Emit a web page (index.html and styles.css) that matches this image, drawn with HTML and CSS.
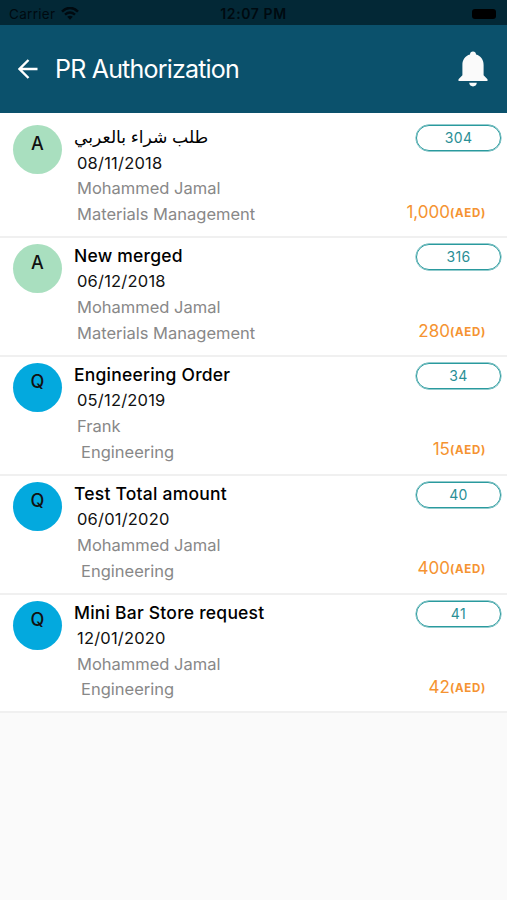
FILE: index.html
```html
<!DOCTYPE html>
<html lang="en">
<head>
    <meta charset="UTF-8">
    <meta name="viewport" content="width=device-width, initial-scale=1.0">
    <title>PR Authorization</title>
    <link rel="stylesheet" href="styles.css">
</head>
<body>

    <div class="status-bar">
        <div class="carrier">
            <span>Carrier</span>
            <svg class="wifi" viewBox="0 0 18 13" width="18" height="13">
                <path d="M1 4.6 Q9 -2.6 17 4.6" fill="none" stroke="#000a10" stroke-width="2.6"/>
                <path d="M4 7.6 Q9 3.4 14 7.6" fill="none" stroke="#000a10" stroke-width="2.4"/>
                <path d="M6.2 9.8 Q9 7.6 11.8 9.8 L9 12.8 Z" fill="#000a10"/>
            </svg>
        </div>
        <div class="time">12:07 PM</div>
        <div class="battery"></div>
    </div>

    <header class="toolbar">
        <svg class="back" viewBox="0 0 20 20" width="20" height="20">
            <path d="M19.5 10 H1.8 M10.5 1 L1.5 10 L10.5 19" fill="none" stroke="#fff" stroke-width="2.4"/>
        </svg>
        <h1>PR Authorization</h1>
        <svg class="bell" viewBox="0 0 30 36" width="30" height="36">
            <path d="M15 0.5 C16.8 0.5 18 1.7 18 3.6 C22.8 4.9 25.6 8.8 25.6 14 V24.3 L29.5 28.2 V30 H0.5 V28.2 L4.4 24.3 V14 C4.4 8.8 7.2 4.9 12 3.6 C12 1.7 13.2 0.5 15 0.5 Z" fill="#fafafa"/>
            <path d="M11.2 31.8 H18.8 C18.6 34 17.1 35.4 15 35.4 C12.9 35.4 11.4 34 11.2 31.8 Z" fill="#fafafa"/>
        </svg>
    </header>

    <main class="list">
        <div class="item">
            <div class="avatar green">A</div>
            <div class="info">
                <div class="title arabic">طلب شراء بالعربي</div>
                <div class="date">08/11/2018</div>
                <div class="name">Mohammed Jamal</div>
                <div class="dept">Materials Management</div>
            </div>
            <div class="side">
                <div class="number">304</div>
                <div class="amount">1,000<b>(AED)</b></div>
            </div>
        </div>
        <div class="item">
            <div class="avatar green">A</div>
            <div class="info">
                <div class="title">New merged</div>
                <div class="date">06/12/2018</div>
                <div class="name">Mohammed Jamal</div>
                <div class="dept">Materials Management</div>
            </div>
            <div class="side">
                <div class="number">316</div>
                <div class="amount">280<b>(AED)</b></div>
            </div>
        </div>
        <div class="item">
            <div class="avatar blue">Q</div>
            <div class="info">
                <div class="title">Engineering Order</div>
                <div class="date">05/12/2019</div>
                <div class="name">Frank</div>
                <div class="dept indent">Engineering</div>
            </div>
            <div class="side">
                <div class="number">34</div>
                <div class="amount">15<b>(AED)</b></div>
            </div>
        </div>
        <div class="item">
            <div class="avatar blue">Q</div>
            <div class="info">
                <div class="title">Test Total amount</div>
                <div class="date">06/01/2020</div>
                <div class="name">Mohammed Jamal</div>
                <div class="dept indent">Engineering</div>
            </div>
            <div class="side">
                <div class="number">40</div>
                <div class="amount">400<b>(AED)</b></div>
            </div>
        </div>
        <div class="item">
            <div class="avatar blue">Q</div>
            <div class="info">
                <div class="title">Mini Bar Store request</div>
                <div class="date">12/01/2020</div>
                <div class="name">Mohammed Jamal</div>
                <div class="dept indent">Engineering</div>
            </div>
            <div class="side">
                <div class="number">41</div>
                <div class="amount">42<b>(AED)</b></div>
            </div>
        </div>
    </main>

</body>
</html>
```
FILE: styles.css
```css
* { box-sizing: border-box; }
body { margin: 0; min-height: 900px; background: #fafafa; font-family: Inter, "DejaVu Sans", sans-serif; color: #111; }

.status-bar { display: grid; grid-template-columns: 1fr auto 1fr; align-items: center; height: 25px; padding: 2px 9px 0; background: #032836; color: #000a10; font-size: 13.5px; }
.carrier { display: flex; align-items: center; gap: 6px; letter-spacing: 0.3px; }
.time { font-weight: 600; font-size: 14px; letter-spacing: 0.6px; }
.battery { justify-self: end; width: 24px; height: 10px; margin-right: 2px; border-radius: 3px; background: #000; }

.toolbar { display: flex; align-items: center; height: 88px; padding: 0 19px 0 18px; background: #0b516c; color: #fff; }
.toolbar h1 { flex: 1; margin: 0 0 0 17px; font-size: 25px; font-weight: 400; letter-spacing: -0.8px; }

.list { padding-top: 6.4px; background: #fff; }
.item { display: flex; height: 118.8px; padding: 6px 6px 0 13px; border-bottom: 2px solid #f0f0f0; }

.avatar { width: 49px; height: 49px; border-radius: 50%; text-align: center; font-size: 18px; font-weight: 500; line-height: 37px; }
.green { background: #a9dfbf; }
.blue { background: #03a9de; }

.info { flex: 1; padding-left: 15px; font-size: 16.5px; line-height: 25.8px; white-space: nowrap; }
.title { margin-left: -3px; font-size: 17.5px; font-weight: 500; height: 25.2px; line-height: 23px; letter-spacing: 0.22px; color: #000; }
.arabic { font-size: 17.2px; letter-spacing: 0; }
.date { height: 25.8px; letter-spacing: 0.2px; }
.name, .dept { color: #888; }
.indent { padding-left: 4px; }

.side { display: flex; flex-direction: column; align-items: flex-end; width: 100px; }
.number { width: 85px; height: 26px; border: 1.5px solid #2a9a9e; border-radius: 13px; text-align: center; font-size: 14px; line-height: 23px; letter-spacing: 0.4px; color: #2a8f96; box-shadow: 0 0 0 0.4px #2a9a9e; }
.amount { margin: 48.5px 15px 0 0; font-size: 17px; line-height: 24px; color: #f59331; white-space: nowrap; }
.amount b { font-size: 11.5px; letter-spacing: 0.7px; position: relative; top: -1px; }
```
